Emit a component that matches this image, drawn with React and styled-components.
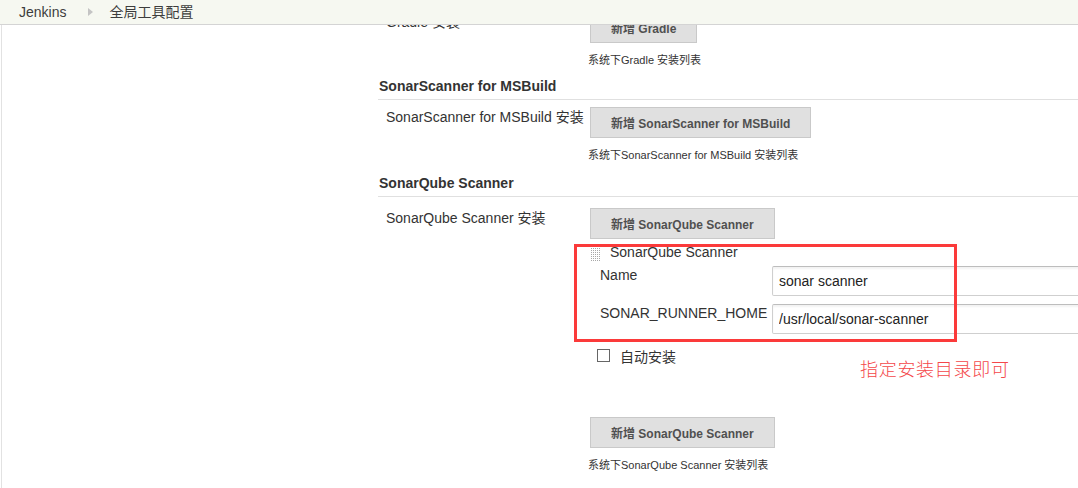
import React from "react";
import styled, { createGlobalStyle } from "styled-components";

const GlobalStyle = createGlobalStyle`
  html, body {
    margin: 0;
    padding: 0;
    background: #fff;
    overflow: hidden;
  }
  body {
    font-family: "Liberation Sans", "Noto Sans CJK SC", sans-serif;
    font-size: 14px;
    color: #333;
  }
`;

const Page = styled.div`
  width: 1078px;
  height: 488px;
  display: flex;
  flex-direction: column;
  overflow: hidden;
`;

const Breadcrumbs = styled.div`
  position: relative;
  z-index: 2;
  flex: none;
  height: 24px;
  display: flex;
  align-items: center;
  padding-left: 19px;
  background: #f6f8f1;
  border-bottom: 1px solid #d4d4d4;
  font-size: 14px;
  color: #3d3d3d;
`;

const Crumb = styled.span`
  line-height: 24px;
`;

const Arrow = styled.span`
  width: 0;
  height: 0;
  margin: 0 16px 0 22px;
  border-top: 4px solid transparent;
  border-bottom: 4px solid transparent;
  border-left: 5px solid #c4c4c4;
`;

const Body = styled.div`
  flex: 1;
  display: flex;
  min-height: 0;
`;

const SidePanel = styled.div`
  flex: none;
  width: 376px;
  margin-left: 1px;
  border-left: 1px solid #e2e2e2;
`;

const Main = styled.div`
  flex: none;
  width: 800px;
`;

const Content = styled.div`
  margin-top: -13px;
`;

const Heading = styled.div`
  margin-top: ${({ $top }) => $top}px;
  padding: 0 0 5px 1px;
  line-height: 16px;
  font-size: 14px;
  font-weight: bold;
  color: #333;
  border-bottom: 1px solid #e0e0e0;
`;

const Row = styled.div`
  display: grid;
  grid-template-columns: 202px 1fr;
  padding: ${({ $top }) => $top}px 0 0 8px;
`;

const Label = styled.div`
  padding-top: 2px;
  line-height: 17px;
  font-size: 14px;
  color: #333;
`;

const Setting = styled.div`
  display: flex;
  flex-direction: column;
  align-items: flex-start;
`;

const AddButton = styled.button`
  height: 31px;
  margin: ${({ $top }) => $top || 0}px 0 0 2px;
  padding: 0 20px;
  background: #e0e0e0;
  border: 1px solid #c9c9c9;
  border-radius: 0;
  font-family: "Liberation Sans", "Noto Sans CJK SC", sans-serif;
  font-size: 12px;
  font-weight: bold;
  color: #505050;
`;

const Desc = styled.div`
  margin-top: 10px;
  line-height: 15px;
  font-size: 11px;
  color: #333;
`;

const Chunk = styled.div`
  position: relative;
  margin-top: 5px;
`;

const Highlight = styled.div`
  position: absolute;
  top: 0;
  left: -14px;
  width: 377px;
  height: 92px;
  border: 3px solid #fb3a3a;
  pointer-events: none;
`;

const ChunkTitle = styled.div`
  display: flex;
  align-items: flex-start;
  gap: 9px;
  padding-left: 3px;
  line-height: 16px;
  font-size: 14px;
  color: #333;
`;

const GripBox = styled.svg`
  flex: none;
  margin-top: 2px;
`;

const FieldGrid = styled.div`
  display: grid;
  grid-template-columns: 172px 340px;
  row-gap: 8px;
  margin-top: 4px;
  padding-left: 12px;
`;

const FieldLabel = styled.div`
  padding-top: 1px;
  line-height: 17px;
  font-size: 14px;
  color: #333;
`;

const TextInput = styled.input`
  box-sizing: border-box;
  width: 100%;
  height: 30px;
  padding: 0 6px;
  border: 1px solid #cfcfcf;
  border-top-color: #bdbdbd;
  border-radius: 2px;
  box-shadow: inset 0 2px 2px rgba(0, 0, 0, 0.05);
  font-family: "Liberation Sans", "Noto Sans CJK SC", sans-serif;
  font-size: 14px;
  color: #222;
  outline: none;
`;

const CheckRow = styled.div`
  display: flex;
  align-items: flex-start;
  margin-top: 14px;
  padding-left: 9px;
`;

const CheckBox = styled.span`
  box-sizing: border-box;
  width: 13px;
  height: 13px;
  margin: 1px 10px 0 0;
  border: 1px solid #666;
  background: #fff;
`;

const CheckLabel = styled.span`
  line-height: 18px;
  font-size: 14px;
  color: #333;
`;

const Note = styled.span`
  margin: 9px 0 0 184px;
  line-height: 22px;
  font-family: "Noto Sans CJK SC", sans-serif;
  font-size: 18px;
  font-weight: 300;
  letter-spacing: 0.7px;
  color: #f4474a;
`;

function Grip() {
  const dots = [];
  for (let r = 0; r < 8; r++) {
    for (let c = 0; c < 5; c++) {
      dots.push(<rect key={`${r}-${c}`} x={c * 2} y={r * 2} width="1" height="1" fill="#a8a8a8" />);
    }
  }
  return (
    <GripBox width="10" height="16" viewBox="0 0 10 16">
      {dots}
    </GripBox>
  );
}

export default function App() {
  return (
    <>
      <GlobalStyle />
      <Page>
        <Breadcrumbs>
          <Crumb>Jenkins</Crumb>
          <Arrow />
          <Crumb>全局工具配置</Crumb>
        </Breadcrumbs>
        <Body>
          <SidePanel />
          <Main>
            <Content>
              <Row $top={0}>
                <Label>Gradle 安装</Label>
                <Setting>
                  <AddButton>新增 Gradle</AddButton>
                  <Desc>系统下Gradle 安装列表</Desc>
                </Setting>
              </Row>

              <Heading $top={10}>SonarScanner for MSBuild</Heading>
              <Row $top={7}>
                <Label>SonarScanner for MSBuild 安装</Label>
                <Setting>
                  <AddButton>新增 SonarScanner for MSBuild</AddButton>
                  <Desc>系统下SonarScanner for MSBuild 安装列表</Desc>
                </Setting>
              </Row>

              <Heading $top={12}>SonarQube Scanner</Heading>
              <Row $top={11}>
                <Label>SonarQube Scanner 安装</Label>
                <Setting>
                  <AddButton>新增 SonarQube Scanner</AddButton>
                  <Chunk>
                    <Highlight />
                    <ChunkTitle>
                      <Grip />
                      SonarQube Scanner
                    </ChunkTitle>
                    <FieldGrid>
                      <FieldLabel>Name</FieldLabel>
                      <TextInput defaultValue="sonar scanner" />
                      <FieldLabel>SONAR_RUNNER_HOME</FieldLabel>
                      <TextInput defaultValue="/usr/local/sonar-scanner" />
                    </FieldGrid>
                  </Chunk>
                  <CheckRow>
                    <CheckBox />
                    <CheckLabel>自动安装</CheckLabel>
                    <Note>指定安装目录即可</Note>
                  </CheckRow>
                  <AddButton $top={38}>新增 SonarQube Scanner</AddButton>
                  <Desc>系统下SonarQube Scanner 安装列表</Desc>
                </Setting>
              </Row>
            </Content>
          </Main>
        </Body>
      </Page>
    </>
  );
}
